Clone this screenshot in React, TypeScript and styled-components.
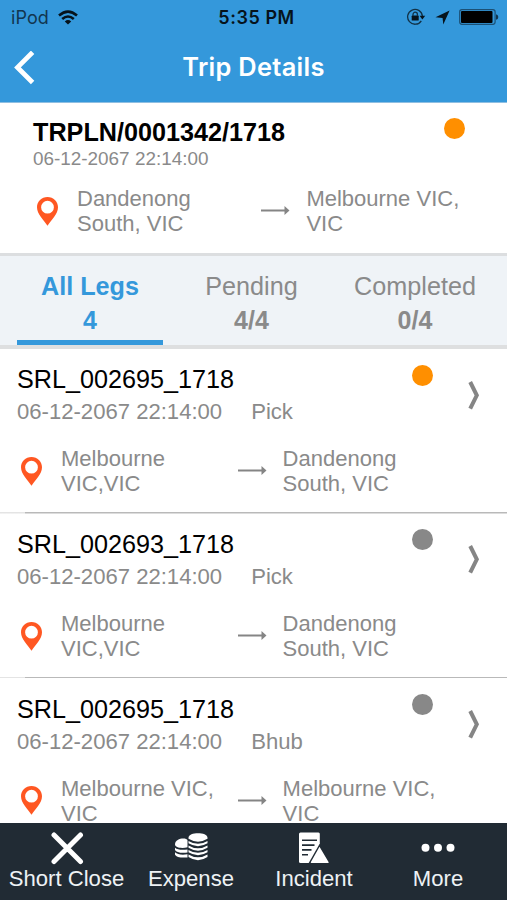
import React from 'react';
import styled, { createGlobalStyle } from 'styled-components';

const BLUE = '#3498db';
const GREY = '#8a8a8a';
const ORANGE = '#ff8f00';

const GlobalStyle = createGlobalStyle`
  * { box-sizing: border-box; }
  html, body { margin: 0; padding: 0; }
  body { background: #fff; font-family: 'Liberation Sans', Arial, sans-serif; }
`;

const Screen = styled.div`
  width: 507px;
  height: 900px;
  display: flex;
  flex-direction: column;
  overflow: hidden;
  background: #fff;
`;

const TopBar = styled.header`
  flex: none;
  height: 103px;
  background: ${BLUE};
  border-bottom: 1px solid #8fbfe2;
  font-family: Inter, sans-serif;
`;

const StatusBar = styled.div`
  height: 34px;
  display: grid;
  grid-template-columns: 1fr auto 1fr;
  align-items: center;
  padding: 0 8px 0 11px;
  color: #06131c;
`;

const Carrier = styled.div`
  display: flex;
  align-items: center;
  gap: 9px;
  font-size: 18px;
  letter-spacing: 0.1px;
  color: #12364f;
`;

const Clock = styled.div`
  font-size: 18px;
  font-weight: 600;
  letter-spacing: 0.55px;
  padding-left: 3px;
`;

const StatusIcons = styled.div`
  display: flex;
  align-items: center;
  justify-content: flex-end;
  gap: 9px;
`;

const NavBar = styled.div`
  height: 68px;
  display: grid;
  grid-template-columns: 60px 1fr 60px;
  align-items: center;
`;

const BackButton = styled.button`
  border: 0;
  background: none;
  padding: 0 0 0 14px;
  display: flex;
`;

const NavTitle = styled.h1`
  margin: 0;
  padding-bottom: 2px;
  line-height: 30px;
  text-align: center;
  color: #fff;
  font-size: 25.4px;
  font-weight: 600;
  letter-spacing: 0.3px;
`;

const Summary = styled.section`
  flex: none;
  height: 150px;
  display: grid;
  grid-template-columns: 1fr 21px;
  padding: 14px 42px 0 33px;
`;

const SummaryTitle = styled.h2`
  margin: 0;
  font-size: 25.2px;
  line-height: 30px;
  font-weight: 700;
  color: #000;
`;

const SummaryDate = styled.div`
  font-size: 18.9px;
  line-height: 23px;
  color: ${GREY};
`;

const Dot = styled.span<{ $active: boolean; $top: number }>`
  width: 21px;
  height: 21px;
  border-radius: 50%;
  margin-top: ${({ $top }) => $top}px;
  background: ${({ $active }) => ($active ? ORANGE : '#888')};
`;

const Route = styled.div<{ $top: number; $arrowAt: number }>`
  grid-column: 1 / -1;
  display: grid;
  grid-template-columns: 40px ${({ $arrowAt }) => $arrowAt}px 45px 1fr;
  padding-left: 4px;
  margin-top: ${({ $top }) => $top}px;
`;

const Place = styled.div`
  font-size: 22px;
  line-height: 25px;
  color: ${GREY};
  white-space: pre;
`;

const PinSlot = styled.span`
  padding-top: 10.6px;
  line-height: 0;
`;

const ArrowSlot = styled.span`
  padding-top: 19px;
  line-height: 0;
`;

const Tabs = styled.nav`
  flex: none;
  height: 96px;
  display: grid;
  grid-template-columns: 146px 177px 150px;
  padding-left: 17px;
  background: #eff3f7;
  border-top: 3px solid #dcdee0;
  border-bottom: 4px solid #dedfe0;
`;

const Tab = styled.button<{ $active?: boolean }>`
  border: 0;
  border-bottom: 5px solid ${({ $active }) => ($active ? BLUE : 'transparent')};
  background: none;
  padding: 13px 0 0;
  display: flex;
  flex-direction: column;
  align-items: center;
  justify-content: flex-start;
  font-family: inherit;
  font-size: 25.2px;
  line-height: 34px;
  font-weight: ${({ $active }) => ($active ? 700 : 400)};
  color: ${({ $active }) => ($active ? BLUE : GREY)};
`;

const TabCount = styled.span`
  font-weight: 700;
  font-size: 25px;
`;

const LegList = styled.main`
  flex: 1;
  min-height: 0;
  overflow: hidden;
`;

const Leg = styled.article`
  height: 164.6px;
  display: grid;
  grid-template-columns: 395px 21px 1fr;
  grid-template-rows: 84px 1fr;
  padding: 0 0 0 17px;
  background: linear-gradient(to right, #e4e4e4 25px, #b9b9b9 25px) bottom / 100% 1.5px no-repeat;
`;

const LegInfo = styled.div`
  padding-top: 14.4px;
`;

const LegId = styled.h3`
  margin: 0;
  font-size: 25.2px;
  line-height: 32px;
  font-weight: 400;
  color: #000;
`;

const LegMeta = styled.div`
  display: flex;
  gap: 29px;
  font-size: 22.1px;
  line-height: 33px;
  color: ${GREY};
`;

const ChevronSlot = styled.span`
  padding: 31.6px 0 0 35px;
`;

const Toolbar = styled.footer`
  flex: none;
  height: 77px;
  display: grid;
  grid-template-columns: 129px 120px 126px 122px;
  padding-left: 2px;
  background: #212b34;
`;

const ToolButton = styled.button`
  border: 0;
  background: none;
  padding: 8px 0 0;
  display: flex;
  flex-direction: column;
  align-items: center;
  font-family: inherit;
  font-size: 22.1px;
  line-height: 27px;
  color: #eef2f5;
  white-space: nowrap;
`;

const Wifi = () => (
  <svg width="20" height="15" viewBox="0 0 20 15" fill="none" stroke="#06131c" strokeWidth="2.6">
    <path d="M1 5.600Q10-2.200 19 5.600" />
    <path d="M4.200 9Q10 4 15.800 9" />
    <path d="M6.800 11.400Q10 8.600 13.200 11.400L10 14.600Z" fill="#06131c" stroke="none" />
  </svg>
);

const RotationLock = () => (
  <svg width="20" height="18" viewBox="0 0 20 18" fill="none" stroke="#123247">
    <path d="M15.300 12.800A7.400 7.400 0 1 1 16.400 8" strokeWidth="1.3" />
    <path d="M13.600 7.800h5.600l-2.800 3.600z" fill="#06131c" stroke="none" />
    <rect x="5.700" y="7.600" width="7" height="5" rx="0.600" fill="#06131c" stroke="none" />
    <path d="M7 8V6.400a2.200 2.200 0 0 1 4.400 0V8" strokeWidth="1.300" />
  </svg>
);

const LocationArrow = () => (
  <svg width="15" height="15" viewBox="0 0 15 15">
    <path d="M14.600 .4L8.300 14.600L7.600 7.900L.5 7.200Z" fill="#06131c" />
  </svg>
);

const Battery = () => (
  <svg width="40" height="16" viewBox="0 0 40 16">
    <rect x=".7" y=".7" width="35.400" height="14.600" rx="2.200" fill="none" stroke="#1b5075" strokeWidth="1.200" />
    <rect x="2" y="2" width="31.500" height="12" rx="1" fill="#000" />
    <path d="M37 5.200Q39.300 5.600 39.300 8T37 10.800Z" fill="#12364f" />
  </svg>
);

const BackChevron = () => (
  <svg width="22" height="34" viewBox="0 0 22 34" fill="none" stroke="#fff" strokeWidth="4.800">
    <path d="M18.600 1.300L3.500 16.400L18.600 31.500" />
  </svg>
);

const Pin = () => (
  <svg width="21" height="29" viewBox="0 0 21 29">
    <path
      d="M10.500 0C4.600 0 0 4.500 0 10.300C0 17 6.500 23 10.500 28.800C14.500 23 21 17 21 10.300C21 4.500 16.400 0 10.500 0ZM10.500 3.800A6.400 6.400 0 1 1 10.500 16.600A6.400 6.400 0 1 1 10.500 3.800Z"
      fill="#ff5722"
    />
  </svg>
);

const Arrow = () => (
  <svg width="29" height="11" viewBox="0 0 29 11">
    <path d="M0 4.500H23.500V1L28.500 5.500L23.500 10V6.500H0Z" fill="#858585" />
  </svg>
);

const Chevron = () => (
  <svg width="13" height="29" viewBox="0 0 13 29" fill="none" stroke="#858585" strokeWidth="4">
    <path d="M2.200 1L8.800 14.300L2.200 27.600" />
  </svg>
);

const CloseIcon = () => (
  <svg width="34" height="34" viewBox="0 0 34 34" stroke="#fff" strokeWidth="5" strokeLinecap="round">
    <path d="M4 4L30.500 30.500M30.500 4L4 30.500" />
  </svg>
);

const CoinsIcon = () => (
  <svg width="34" height="34" viewBox="0 0 34 34" fill="#fff">
    <path d="M1 13.500C1 6.800 12.500 6.300 13.500 9.200V16.200C8.500 17.700 1 16.900 1 13.500Z" />
    <path d="M1 16.700Q4.500 19.600 13.500 18.400V21.500Q3 22.500 1 18.900Z" />
    <path d="M1 21.200Q4.500 24.600 13.500 23.300V26.400Q3 27.200 1 23.700Z" />
    <path d="M14.500 6.700C14.500 .8 33.500 .8 33.500 6.700V7.800Q24 13.600 14.500 7.800Z" />
    <path d="M14.500 9.900Q24 15.700 33.500 9.900V12.300Q24 18.100 14.500 12.300Z" />
    <path d="M14.500 14.400Q24 20.200 33.500 14.400V16.800Q24 22.600 14.500 16.800Z" />
    <path d="M14.500 18.900Q24 24.700 33.500 18.900V21.300Q24 27.100 14.500 21.300Z" />
    <path d="M14.500 23.400Q24 29.200 33.500 23.400V26Q24 32.300 14.500 26Z" />
  </svg>
);

const IncidentIcon = () => (
  <svg width="34" height="34" viewBox="0 0 34 34">
    <path d="M3.500 1.500H21.500Q22.800 1.500 22.800 3V12.500L11.700 32H3.500Q2 32 2 30.500V3Q2 1.500 3.500 1.500Z" fill="#fff" />
    <path d="M5 9.300H20M5 14.100H17.500M5 18.900H14.500M5 23.700H11" stroke="#212b34" strokeWidth="1.600" />
    <path d="M22.500 15.800L31.700 31.200Q32 32 31 32H14.500Q13.300 32 13.900 31Z" fill="#fff" />
  </svg>
);

const MoreIcon = () => (
  <svg width="34" height="34" viewBox="0 0 34 34" fill="#fff">
    <circle cx="4.500" cy="16.700" r="4" />
    <circle cx="17" cy="16.700" r="4" />
    <circle cx="29.500" cy="16.700" r="4" />
  </svg>
);

type RouteProps = { from: string; to: string; top: number; arrowAt: number };

const RouteLine = ({ from, to, top, arrowAt }: RouteProps) => (
  <Route $top={top} $arrowAt={arrowAt}>
    <PinSlot><Pin /></PinSlot>
    <Place>{from}</Place>
    <ArrowSlot><Arrow /></ArrowSlot>
    <Place>{to}</Place>
  </Route>
);

const legs = [
  { id: 'SRL_002695_1718', type: 'Pick', from: 'Melbourne\nVIC,VIC', to: 'Dandenong\nSouth, VIC', active: true },
  { id: 'SRL_002693_1718', type: 'Pick', from: 'Melbourne\nVIC,VIC', to: 'Dandenong\nSouth, VIC', active: false },
  { id: 'SRL_002695_1718', type: 'Bhub', from: 'Melbourne VIC,\nVIC', to: 'Melbourne VIC,\nVIC', active: false },
];

const tools = [
  { label: 'Short Close', icon: <CloseIcon /> },
  { label: 'Expense', icon: <CoinsIcon /> },
  { label: 'Incident', icon: <IncidentIcon /> },
  { label: 'More', icon: <MoreIcon /> },
];

export default function App() {
  return (
    <Screen>
      <GlobalStyle />
      <TopBar>
        <StatusBar>
          <Carrier>iPod<Wifi /></Carrier>
          <Clock>5:35 PM</Clock>
          <StatusIcons><RotationLock /><LocationArrow /><Battery /></StatusIcons>
        </StatusBar>
        <NavBar>
          <BackButton aria-label="Back"><BackChevron /></BackButton>
          <NavTitle>Trip Details</NavTitle>
        </NavBar>
      </TopBar>
      <Summary>
        <div>
          <SummaryTitle>TRPLN/0001342/1718</SummaryTitle>
          <SummaryDate>06-12-2067 22:14:00</SummaryDate>
        </div>
        <Dot $active $top={1} />
        <RouteLine from={'Dandenong\nSouth, VIC'} to={'Melbourne VIC,\nVIC'} top={-0.8} arrowAt={184.4} />
      </Summary>
      <Tabs>
        <Tab $active>All Legs<TabCount>4</TabCount></Tab>
        <Tab>Pending<TabCount>4/4</TabCount></Tab>
        <Tab>Completed<TabCount>0/4</TabCount></Tab>
      </Tabs>
      <LegList>
        {legs.map((leg, i) => (
          <Leg key={i}>
            <LegInfo>
              <LegId>{leg.id}</LegId>
              <LegMeta><span>06-12-2067 22:14:00</span><span>{leg.type}</span></LegMeta>
            </LegInfo>
            <Dot $active={leg.active} $top={15.6} />
            <ChevronSlot><Chevron /></ChevronSlot>
            <RouteLine from={leg.from} to={leg.to} top={13.4} arrowAt={176.6} />
          </Leg>
        ))}
      </LegList>
      <Toolbar>
        {tools.map((tool) => (
          <ToolButton key={tool.label}>{tool.icon}{tool.label}</ToolButton>
        ))}
      </Toolbar>
    </Screen>
  );
}
